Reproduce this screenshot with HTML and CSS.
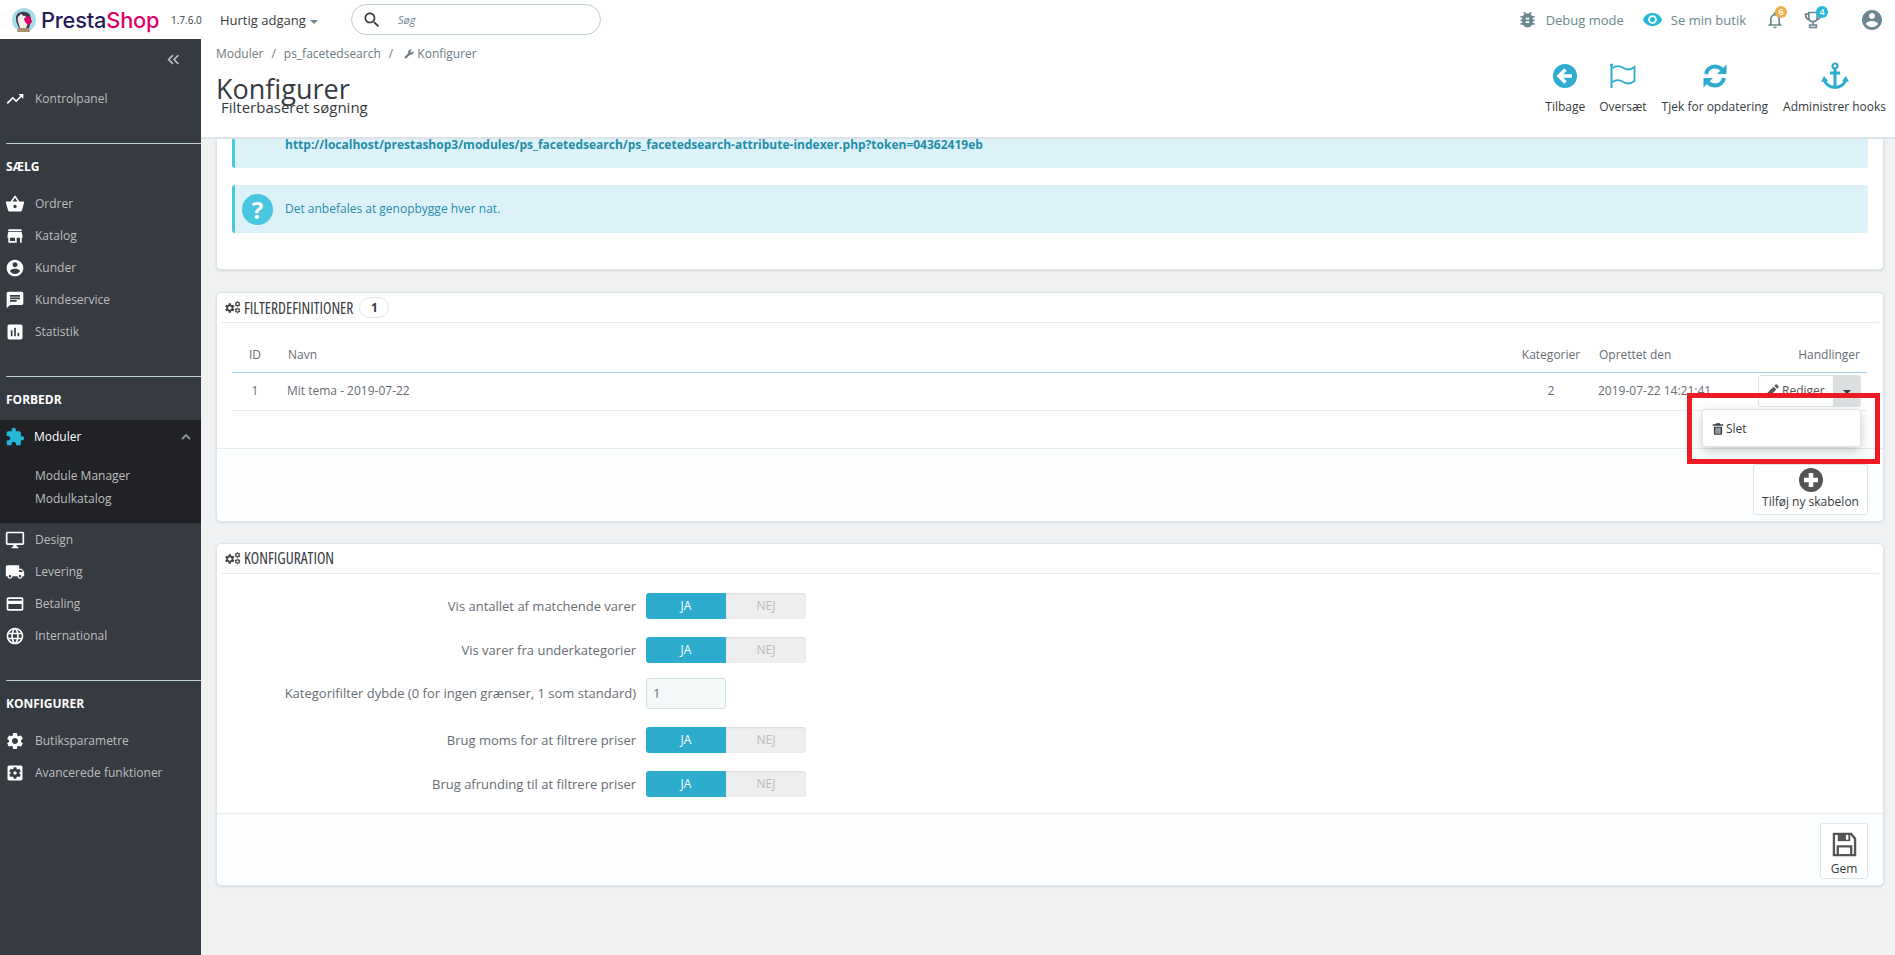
FILE: index.html
```html
<!DOCTYPE html>
<html lang="da">
<head>
  <meta charset="UTF-8" />
  <title>Konfigurer - PrestaShop</title>
  <link rel="stylesheet" href="styles.css">
</head>
<body>
  <svg class="sprite" xmlns="http://www.w3.org/2000/svg">
    <symbol id="i-trend" viewBox="0 0 24 24"><path d="M16 6l2.29 2.29-4.88 4.88-4-4L2 16.59 3.41 18l6-6 4 4 6.3-6.29L22 12V6z"/></symbol>
    <symbol id="i-basket" viewBox="0 0 24 24"><path d="M17.21 9l-4.38-6.56c-.19-.28-.51-.42-.83-.42-.32 0-.64.14-.83.43L6.79 9H2c-.55 0-1 .45-1 1 0 .09.01.18.04.27l2.54 9.27c.23.84 1 1.46 1.92 1.46h13c.92 0 1.69-.62 1.93-1.46l2.54-9.27L23 10c0-.55-.45-1-1-1h-4.79zM9 9l3-4.4L15 9H9zm3 8c-1.1 0-2-.9-2-2s.9-2 2-2 2 .9 2 2-.9 2-2 2z"/></symbol>
    <symbol id="i-store" viewBox="0 0 24 24"><path d="M20 4H4v2h16V4zm1 10v-2l-1-5H4l-1 5v2h1v6h10v-6h4v6h2v-6h1zm-9 4H6v-4h6v4z"/></symbol>
    <symbol id="i-account" viewBox="0 0 24 24"><path d="M12 2C6.48 2 2 6.48 2 12s4.48 10 10 10 10-4.48 10-10S17.52 2 12 2zm0 3c1.66 0 3 1.34 3 3s-1.34 3-3 3-3-1.34-3-3 1.34-3 3-3zm0 14.2c-2.5 0-4.71-1.28-6-3.22.03-1.99 4-3.08 6-3.08 1.99 0 5.97 1.09 6 3.08-1.29 1.94-3.5 3.22-6 3.22z"/></symbol>
    <symbol id="i-chat" viewBox="0 0 24 24"><path d="M20 2H4c-1.1 0-1.99.9-1.99 2L2 22l4-4h14c1.1 0 2-.9 2-2V4c0-1.1-.9-2-2-2zM6 9h12v2H6V9zm8 5H6v-2h8v2zm4-6H6V6h12v2z"/></symbol>
    <symbol id="i-stats" viewBox="0 0 24 24"><path d="M19 3H5c-1.1 0-2 .9-2 2v14c0 1.1.9 2 2 2h14c1.1 0 2-.9 2-2V5c0-1.1-.9-2-2-2zM9 17H7v-7h2v7zm4 0h-2V7h2v10zm4 0h-2v-4h2v4z"/></symbol>
    <symbol id="i-puzzle" viewBox="0 0 24 24"><path d="M20.5 11H19V7c0-1.1-.9-2-2-2h-4V3.5C13 2.12 11.88 1 10.5 1S8 2.12 8 3.5V5H4c-1.1 0-1.99.9-1.99 2v3.8H3.5c1.49 0 2.7 1.21 2.7 2.7s-1.21 2.7-2.7 2.7H2V20c0 1.1.9 2 2 2h3.8v-1.5c0-1.49 1.21-2.7 2.7-2.7 1.49 0 2.7 1.21 2.7 2.7V22H17c1.1 0 2-.9 2-2v-4h1.5c1.38 0 2.5-1.12 2.5-2.5S21.88 11 20.5 11z"/></symbol>
    <symbol id="i-desktop" viewBox="0 0 24 24"><path d="M21 2H3c-1.1 0-2 .9-2 2v12c0 1.1.9 2 2 2h7v2H8v2h8v-2h-2v-2h7c1.1 0 2-.9 2-2V4c0-1.1-.9-2-2-2zm0 14H3V4h18v12z"/></symbol>
    <symbol id="i-truck" viewBox="0 0 24 24"><path d="M20 8h-3V4H3c-1.1 0-2 .9-2 2v11h2c0 1.66 1.34 3 3 3s3-1.34 3-3h6c0 1.66 1.34 3 3 3s3-1.34 3-3h2v-5l-3-4zM6 18.5c-.83 0-1.5-.67-1.5-1.5s.67-1.5 1.5-1.5 1.5.67 1.5 1.5-.67 1.5-1.5 1.5zm13.5-9l1.96 2.5H17V9.5h2.5zm-1.5 9c-.83 0-1.5-.67-1.5-1.5s.67-1.5 1.5-1.5 1.5.67 1.5 1.5-.67 1.5-1.5 1.5z"/></symbol>
    <symbol id="i-card" viewBox="0 0 24 24"><path d="M20 4H4c-1.11 0-1.99.89-1.99 2L2 18c0 1.11.89 2 2 2h16c1.11 0 2-.89 2-2V6c0-1.11-.89-2-2-2zm0 14H4v-6h16v6zm0-10H4V6h16v2z"/></symbol>
    <symbol id="i-globe" viewBox="0 0 24 24"><path d="M11.99 2C6.47 2 2 6.48 2 12s4.47 10 9.99 10C17.52 22 22 17.52 22 12S17.52 2 11.99 2zm6.93 6h-2.95c-.32-1.25-.78-2.45-1.38-3.56 1.84.63 3.37 1.91 4.33 3.56zM12 4.04c.83 1.2 1.48 2.53 1.91 3.96h-3.82c.43-1.43 1.08-2.76 1.91-3.96zM4.26 14C4.1 13.36 4 12.69 4 12s.1-1.36.26-2h3.38c-.08.66-.14 1.32-.14 2 0 .68.06 1.34.14 2H4.26zm.82 2h2.95c.32 1.25.78 2.45 1.38 3.56-1.84-.63-3.37-1.9-4.33-3.56zm2.95-8H5.08c.96-1.66 2.49-2.93 4.33-3.56C8.81 5.55 8.35 6.75 8.03 8zM12 19.96c-.83-1.2-1.48-2.53-1.91-3.96h3.82c-.43 1.43-1.08 2.76-1.91 3.96zM14.34 14H9.66c-.09-.66-.16-1.32-.16-2 0-.68.07-1.35.16-2h4.68c.09.65.16 1.32.16 2 0 .68-.07 1.34-.16 2zm.25 5.56c.6-1.11 1.06-2.31 1.38-3.56h2.95c-.96 1.65-2.49 2.93-4.33 3.56zM16.36 14c.08-.66.14-1.32.14-2 0-.68-.06-1.34-.14-2h3.38c.16.64.26 1.31.26 2s-.1 1.36-.26 2h-3.38z"/></symbol>
    <symbol id="i-gear" viewBox="0 0 24 24"><path d="M19.14 12.94c.04-.3.06-.61.06-.94 0-.32-.02-.64-.07-.94l2.03-1.58c.18-.14.23-.41.12-.61l-1.92-3.32c-.12-.22-.37-.29-.59-.22l-2.39.96c-.5-.38-1.03-.7-1.62-.94l-.36-2.54c-.04-.24-.24-.41-.48-.41h-3.84c-.24 0-.43.17-.47.41l-.36 2.54c-.59.24-1.13.57-1.62.94l-2.39-.96c-.22-.08-.47 0-.59.22L2.74 8.87c-.12.21-.08.47.12.61l2.03 1.58c-.05.3-.09.63-.09.94s.02.64.07.94l-2.03 1.58c-.18.14-.23.41-.12.61l1.92 3.32c.12.22.37.29.59.22l2.39-.96c.5.38 1.03.7 1.62.94l.36 2.54c.05.24.24.41.48.41h3.84c.24 0 .44-.17.47-.41l.36-2.54c.59-.24 1.13-.56 1.62-.94l2.39.96c.22.08.47 0 .59-.22l1.92-3.32c.12-.22.07-.47-.12-.61l-2.01-1.58zM12 15.6c-1.98 0-3.6-1.62-3.6-3.6s1.62-3.6 3.6-3.6 3.6 1.62 3.6 3.6-1.62 3.6-3.6 3.6z"/></symbol>
    <symbol id="i-gearbox" viewBox="0 0 24 24"><path d="M12 10c-1.1 0-2 .9-2 2s.9 2 2 2 2-.9 2-2-.9-2-2-2zm7-7H5c-1.11 0-2 .9-2 2v14c0 1.1.89 2 2 2h14c1.11 0 2-.9 2-2V5c0-1.1-.89-2-2-2zm-1.75 9c0 .23-.02.46-.05.68l1.48 1.16c.13.11.17.3.08.45l-1.4 2.42c-.09.15-.27.21-.43.15l-1.74-.7c-.36.28-.76.51-1.18.69l-.26 1.85c-.03.17-.18.3-.35.3h-2.8c-.17 0-.32-.13-.35-.29l-.26-1.85c-.43-.18-.82-.41-1.18-.69l-1.74.7c-.16.06-.34 0-.43-.15l-1.4-2.42c-.09-.15-.05-.34.08-.45l1.48-1.16c-.03-.23-.05-.46-.05-.69 0-.23.02-.46.05-.68l-1.48-1.16c-.13-.11-.17-.3-.08-.45l1.4-2.42c.09-.15.27-.21.43-.15l1.74.7c.36-.28.76-.51 1.18-.69l.26-1.85c.03-.17.18-.3.35-.3h2.8c.17 0 .32.13.35.29l.26 1.85c.43.18.82.41 1.18.69l1.74-.7c.16-.06.34 0 .43.15l1.4 2.42c.09.15.05.34-.08.45l-1.48 1.16c.03.23.05.46.05.69z"/></symbol>
    <symbol id="i-search" viewBox="0 0 24 24"><path d="M15.5 14h-.79l-.28-.27C15.41 12.59 16 11.11 16 9.5 16 5.91 13.09 3 9.5 3S3 5.91 3 9.5 5.91 16 9.5 16c1.61 0 3.09-.59 4.23-1.57l.27.28v.79l5 4.99L20.49 19l-4.99-5zm-6 0C7.01 14 5 11.99 5 9.5S7.01 5 9.5 5 14 7.01 14 9.5 11.99 14 9.5 14z"/></symbol>
    <symbol id="i-bug" viewBox="0 0 24 24"><path d="M20 8h-2.81c-.45-.78-1.07-1.45-1.82-1.96L17 4.41 15.59 3l-2.17 2.17C12.96 5.06 12.49 5 12 5c-.49 0-.96.06-1.41.17L8.41 3 7 4.41l1.62 1.63C7.88 6.55 7.26 7.22 6.81 8H4v2h2.09c-.05.33-.09.66-.09 1v1H4v2h2v1c0 .34.04.67.09 1H4v2h2.81c1.04 1.79 2.97 3 5.19 3s4.15-1.21 5.19-3H20v-2h-2.09c.05-.33.09-.66.09-1v-1h2v-2h-2v-1c0-.34-.04-.67-.09-1H20V8zm-6 8h-4v-2h4v2zm0-4h-4v-2h4v2z"/></symbol>
    <symbol id="i-eye" viewBox="0 0 24 24"><path d="M12 4.5C7 4.5 2.73 7.61 1 12c1.73 4.39 6 7.5 11 7.5s9.27-3.11 11-7.5c-1.73-4.39-6-7.5-11-7.5zM12 17c-2.76 0-5-2.24-5-5s2.24-5 5-5 5 2.24 5 5-2.24 5-5 5zm0-8c-1.66 0-3 1.34-3 3s1.34 3 3 3 3-1.34 3-3-1.34-3-3-3z"/></symbol>
    <symbol id="i-bell" viewBox="0 0 24 24"><path d="M12 22c1.1 0 2-.9 2-2h-4c0 1.1.9 2 2 2zm6-6v-5c0-3.07-1.63-5.64-4.5-6.32V4c0-.83-.67-1.5-1.5-1.5s-1.5.67-1.5 1.5v.68C7.64 5.36 6 7.92 6 11v5l-2 2v1h16v-1l-2-2zm-2 1H8v-6c0-2.48 1.51-4.5 4-4.5s4 2.02 4 4.5v6z"/></symbol>
    <symbol id="i-edit" viewBox="0 0 24 24"><path d="M3 17.25V21h3.75L17.81 9.94l-3.75-3.75L3 17.25zM20.71 7.04c.39-.39.39-1.02 0-1.41l-2.34-2.34c-.39-.39-1.02-.39-1.41 0l-1.83 1.83 3.75 3.75 1.83-1.83z"/></symbol>
    <symbol id="i-wrench" viewBox="0 0 24 24"><path d="M22.7 19l-9.1-9.1c.9-2.3.4-5-1.5-6.9-2-2-5-2.4-7.4-1.3L9 6 6 9 1.6 4.7C.4 7.1.9 10.1 2.9 12.1c1.9 1.9 4.6 2.4 6.9 1.5l9.1 9.1c.4.4 1 .4 1.4 0l2.3-2.3c.5-.4.5-1.1.1-1.4z" transform="matrix(-1 0 0 1 24 0)"/></symbol>
    <symbol id="i-trash" viewBox="0 0 24 24"><path fill-rule="evenodd" d="M5 8h14v12c0 1.1-.9 2-2 2H7c-1.1 0-2-.9-2-2V8zm3 2v10h1.500V10H8zm3.250 0v10h1.500V10h-1.500zm3.250 0v10H16V10h-1.500zM3 4h5l1-2h6l1 2h5v2.500H3V4z"/></symbol>
  </svg>

  <header class="topbar">
    <a class="logo">
      <svg class="logo-mark" viewBox="0 0 24 24">
        <circle cx="12" cy="12" r="12" fill="#a5dbe8"/>
        <path d="M4 9c1-6 11-7 14-2 1 3 1 8-1 13H7C5 16 3.500 13 4 9z" fill="#3f3e4e"/>
        <path d="M6 9c2-2 7-2 9 1 1 3 1 7-1 10H8C7 16 5 12 6 9z" fill="#efeee8"/>
        <circle cx="9" cy="7.500" r="1.300" fill="#fff"/>
        <path d="M12 10l6-2 2 6-3 3c-3-1-5-4-5-7z" fill="#df0067"/>
        <path d="M6 20h11l1 4H5z" fill="#a98f72"/>
      </svg>
      <span class="logo-text"><span class="logo-presta">Presta</span><span class="logo-shop">Shop</span></span>
    </a>
    <span class="version">1.7.6.0</span>
    <a class="quick">Hurtig adgang <i class="caret"></i></a>
    <div class="search">
      <svg class="ic search-ic"><use href="#i-search"/></svg>
      <span class="search-ph">Søg</span>
    </div>
    <div class="top-right">
      <a class="top-link top-link-debug"><svg class="ic ic-bug"><use href="#i-bug"/></svg><span>Debug mode</span></a>
      <a class="top-link"><svg class="ic ic-eye"><use href="#i-eye"/></svg><span>Se min butik</span></a>
      <a class="notif notif-bell"><svg class="ic"><use href="#i-bell"/></svg><b class="count count-orange">6</b></a>
      <a class="notif notif-cup">
        <svg class="ic-cup" viewBox="0 0 24 24" fill="none" stroke="#6c868e" stroke-width="2">
          <path d="M7 3h10v6c0 3-2 5-5 5s-5-2-5-5V3zM7 5H3c0 4 1 6 5 7M17 5h4c0 4-1 6-5 7M12 14v4M8 21v-3h8v3H8z"/>
        </svg>
        <b class="count count-blue">4</b>
      </a>
      <svg class="ic ic-user"><use href="#i-account"/></svg>
    </div>
  </header>

  <div class="layout">
    <nav class="sidebar">
      <div class="collapse">
        <svg viewBox="0 0 12 12" fill="none" stroke="#bebebe" stroke-width="1.500"><path d="M5.500 2L1.500 6l4 4M10.500 2l-4 4 4 4"/></svg>
      </div>
      <a class="nav-item nav-first"><svg class="ic"><use href="#i-trend"/></svg>Kontrolpanel</a>

      <div class="nav-title">SÆLG</div>
      <a class="nav-item"><svg class="ic"><use href="#i-basket"/></svg>Ordrer</a>
      <a class="nav-item"><svg class="ic"><use href="#i-store"/></svg>Katalog</a>
      <a class="nav-item"><svg class="ic"><use href="#i-account"/></svg>Kunder</a>
      <a class="nav-item"><svg class="ic"><use href="#i-chat"/></svg>Kundeservice</a>
      <a class="nav-item"><svg class="ic"><use href="#i-stats"/></svg>Statistik</a>

      <div class="nav-title">FORBEDR</div>
      <div class="nav-open">
        <a class="nav-item nav-active">
          <svg class="ic ic-puzzle"><use href="#i-puzzle"/></svg>Moduler
          <svg class="chev" viewBox="0 0 12 12" fill="none" stroke="#8a9299" stroke-width="1.800"><path d="M2 8l4-4 4 4"/></svg>
        </a>
        <a class="nav-sub">Module Manager</a>
        <a class="nav-sub">Modulkatalog</a>
      </div>
      <a class="nav-item nav-after-open"><svg class="ic"><use href="#i-desktop"/></svg>Design</a>
      <a class="nav-item"><svg class="ic"><use href="#i-truck"/></svg>Levering</a>
      <a class="nav-item"><svg class="ic"><use href="#i-card"/></svg>Betaling</a>
      <a class="nav-item"><svg class="ic"><use href="#i-globe"/></svg>International</a>

      <div class="nav-title">KONFIGURER</div>
      <a class="nav-item"><svg class="ic"><use href="#i-gear"/></svg>Butiksparametre</a>
      <a class="nav-item"><svg class="ic"><use href="#i-gearbox"/></svg>Avancerede funktioner</a>
    </nav>

    <main class="main">
      <div class="page-head">
        <div class="head-left">
          <div class="crumbs">
            <span>Moduler</span><i>/</i><span>ps_facetedsearch</span><i>/</i>
            <span class="crumb-last"><svg class="ic ic-wrench"><use href="#i-wrench"/></svg> Konfigurer</span>
          </div>
          <h1>Konfigurer</h1>
          <h2>Filterbaseret søgning</h2>
        </div>
        <div class="toolbar">
          <a class="tool tool-back">
            <svg viewBox="0 0 26 26"><circle cx="13" cy="13" r="12" fill="#2eacce"/><path d="M13.500 6.500L7 13l6.500 6.500M7.500 13H20" fill="none" stroke="#fff" stroke-width="3.600"/></svg>
            <span>Tilbage</span>
          </a>
          <a class="tool tool-flag">
            <svg viewBox="0 0 28 26" fill="none" stroke="#2eacce" stroke-width="1.800"><circle cx="2.500" cy="2" r="1.500" fill="#2eacce" stroke="none"/><path d="M2.500 3v22" stroke-width="2"/><path d="M3.500 5c4-3 8-2 11 0s7 2 11-1v14c-4 3-8 3-11 1s-7-3-11 0"/></svg>
            <span>Oversæt</span>
          </a>
          <a class="tool tool-refresh">
            <svg viewBox="0 0 26 26"><path d="M4 11C5 6.500 8.500 3.500 13 3.500c3 0 5.300 1.300 7 3" fill="none" stroke="#2eacce" stroke-width="4"/><path d="M24.500 1.500V11h-9.500z" fill="#2eacce"/><path d="M22 15c-1 4.500-4.500 7.500-9 7.500-3 0-5.300-1.300-7-3" fill="none" stroke="#2eacce" stroke-width="4"/><path d="M1.500 24.500V15h9.500z" fill="#2eacce"/></svg>
            <span>Tjek for opdatering</span>
          </a>
          <a class="tool tool-anchor">
            <svg viewBox="0 0 28 28" fill="none" stroke="#2eacce"><circle cx="14" cy="4" r="2.500" stroke-width="2.200"/><path d="M14 6.500V26M9 11h10" stroke-width="3"/><path d="M3.500 17c.5 5 5 8 10.500 8.500 5.500-.5 10-3.500 10.500-8.500" stroke-width="3"/><path d="M0 20l3-6 4 5zM28 20l-3-6-4 5z" fill="#2eacce" stroke="none"/></svg>
            <span>Administrer hooks</span>
          </a>
        </div>
      </div>

      <div class="content">
        <section class="card card-info">
          <div class="alert alert-link">
            <a>http://localhost/prestashop3/modules/ps_facetedsearch/ps_facetedsearch-attribute-indexer.php?token=04362419eb</a>
          </div>
          <div class="alert alert-note">
            <span class="alert-q">?</span>
            <span>Det anbefales at genopbygge hver nat.</span>
          </div>
        </section>

        <section class="card">
          <h3 class="card-head">
            <svg class="ic-gears" viewBox="0 0 30 24"><use href="#i-gear" x="-2" y="2" width="22" height="22"/><use href="#i-gear" x="17" y="-1" width="13" height="13"/><use href="#i-gear" x="17" y="11" width="13" height="13"/></svg>
            <span class="head-text">FILTERDEFINITIONER</span>
            <span class="badge">1</span>
          </h3>
          <div class="table-wrap">
            <table class="list">
              <colgroup><col class="c-id"><col><col class="c-cat"><col class="c-date"><col class="c-act"></colgroup>
              <thead>
                <tr><th class="center">ID</th><th>Navn</th><th class="center">Kategorier</th><th class="th-date">Oprettet den</th><th class="right">Handlinger</th></tr>
              </thead>
              <tbody>
                <tr>
                  <td class="center">1</td>
                  <td>Mit tema - 2019-07-22</td>
                  <td class="center">2</td>
                  <td class="date">2019-07-22 14:21:41</td>
                  <td class="right">
                    <div class="btn-group">
                      <a class="btn-edit"><svg class="ic"><use href="#i-edit"/></svg>Rediger</a>
                      <a class="btn-caret"><i class="caret caret-dark"></i></a>
                      <div class="menu"><a><svg class="ic"><use href="#i-trash"/></svg>Slet</a></div>
                    </div>
                  </td>
                </tr>
              </tbody>
            </table>
          </div>
          <div class="card-foot">
            <a class="foot-btn foot-btn-add">
              <svg viewBox="0 0 24 24"><circle cx="12" cy="12" r="12" fill="#555"/><path d="M12 5v14M5 12h14" stroke="#fff" stroke-width="4.500"/></svg>
              <span>Tilføj ny skabelon</span>
            </a>
          </div>
        </section>

        <section class="card">
          <h3 class="card-head">
            <svg class="ic-gears" viewBox="0 0 30 24"><use href="#i-gear" x="-2" y="2" width="22" height="22"/><use href="#i-gear" x="17" y="-1" width="13" height="13"/><use href="#i-gear" x="17" y="11" width="13" height="13"/></svg>
            <span class="head-text">KONFIGURATION</span>
          </h3>
          <div class="form">
            <div class="form-row">
              <label>Vis antallet af matchende varer</label>
              <div class="switch"><span class="on">JA</span><span class="off">NEJ</span></div>
            </div>
            <div class="form-row">
              <label>Vis varer fra underkategorier</label>
              <div class="switch"><span class="on">JA</span><span class="off">NEJ</span></div>
            </div>
            <div class="form-row form-row-input">
              <label>Kategorifilter dybde (0 for ingen grænser, 1 som standard)</label>
              <input class="num" type="text" value="1">
            </div>
            <div class="form-row">
              <label>Brug moms for at filtrere priser</label>
              <div class="switch"><span class="on">JA</span><span class="off">NEJ</span></div>
            </div>
            <div class="form-row">
              <label>Brug afrunding til at filtrere priser</label>
              <div class="switch"><span class="on">JA</span><span class="off">NEJ</span></div>
            </div>
          </div>
          <div class="card-foot card-foot-save">
            <a class="foot-btn foot-btn-save">
              <svg viewBox="0 0 26 26" fill="none" stroke="#555" stroke-width="2.400"><path d="M2 2h18l4 5v17H2z"/><path d="M6 24v-9h14v9"/><path d="M6 1.500h13v8H6z" fill="#555" stroke="none"/><path d="M14.500 3h2.500v5h-2.500z" fill="#fff" stroke="none"/></svg>
              <span>Gem</span>
            </a>
          </div>
        </section>
      </div>
    </main>
  </div>

  <div class="annotation"></div>
</body>
</html>
```

FILE: styles.css
```css
* {
  box-sizing: border-box;
}

html, body {
  height: 100%;
}

body {
  margin: 0;
  position: relative;
  overflow: hidden;
  background: #eff1f2;
  color: #363a41;
  font-family: "Open Sans", sans-serif;
  font-size: 12px;
  line-height: 18px;
}

.sprite {
  display: none;
}

.ic {
  width: 20px;
  height: 20px;
  fill: currentColor;
  flex: none;
}

/* top bar */
.topbar {
  height: 39px;
  background: #fff;
  display: flex;
  align-items: center;
  padding-left: 12px;
}

.logo {
  display: flex;
  align-items: center;
  width: 159px;
}

.logo-mark {
  width: 24px;
  height: 24px;
  margin-right: 5px;
}

.logo-text {
  font-family: Inter, sans-serif;
  font-size: 21.800px;
  font-weight: 500;
  letter-spacing: -.2px;
}

.logo-presta {
  color: #251b5b;
}

.logo-shop {
  color: #df0067;
}

.version {
  font-size: 10px;
  color: #363a41;
  width: 49px;
}

.quick {
  font-size: 13px;
  color: #363a41;
  width: 131px;
}

.caret {
  display: inline-block;
  border-top: 4px solid #6c868e;
  border-left: 4px solid transparent;
  border-right: 4px solid transparent;
  margin-left: 1px;
  vertical-align: 1px;
}

.search {
  width: 250px;
  height: 31px;
  border: 1px solid #bbcdd2;
  border-radius: 16px;
  display: flex;
  align-items: center;
  padding-left: 10px;
  color: #363a41;
}

.search-ic {
  width: 20px;
  height: 20px;
}

.search-ph {
  margin-left: 16px;
  font-size: 11px;
  font-style: italic;
  color: #6c868e;
}

.top-right {
  margin-left: auto;
  display: flex;
  align-items: center;
  padding-right: 11px;
  color: #6c868e;
}

.top-link {
  display: flex;
  align-items: center;
  gap: 8px;
  font-size: 13px;
  margin-right: 19px;
}

.top-link-debug {
  margin-right: 18px;
}

.ic-bug {
  width: 21px;
  height: 21px;
}

.ic-eye {
  width: 21px;
  height: 21px;
  color: #25b9d7;
}

.notif {
  position: relative;
  display: flex;
  width: 38px;
}

.ic-cup {
  width: 20px;
  height: 20px;
}

.count {
  position: absolute;
  top: -4px;
  left: 10px;
  width: 12px;
  height: 12px;
  border-radius: 50%;
  color: #fff;
  font-size: 9px;
  font-weight: 600;
  line-height: 12px;
  text-align: center;
}

.count-orange {
  background: #f0ad4e;
}

.count-blue {
  left: 13px;
  background: #25b9d7;
}

.ic-user {
  width: 24px;
  height: 24px;
  margin-left: 19px;
}

.layout {
  display: flex;
  height: 916px;
}

/* sidebar */
.sidebar {
  width: 201px;
  flex: none;
  background: #363a41;
  color: #bebebe;
}

.collapse {
  height: 40px;
  padding: 14px 0 0 167px;
}

.collapse svg {
  display: block;
  width: 13px;
  height: 13px;
}

.nav-item {
  height: 32px;
  display: flex;
  align-items: center;
  gap: 10px;
  padding-left: 5px;
  font-size: 12px;
}

.nav-item .ic {
  color: #fff;
}

.nav-first {
  margin-top: 4px;
}

.nav-title {
  margin: 28px 0 0 6px;
  height: 45px;
  padding-top: 14px;
  border-top: 1px solid #bcd0d6;
  color: #fff;
  font-size: 12px;
  font-weight: 700;
}

.nav-open {
  margin-top: -1px;
  height: 103px;
  background: #202226;
}

.nav-after-open {
  margin-top: 1px;
}

.nav-active {
  height: 34px;
  color: #fff;
  gap: 9px;
}

.nav-active .ic-puzzle {
  color: #25b9d7;
}

.chev {
  width: 12px;
  height: 12px;
  margin-left: auto;
  margin-right: 9px;
}

.nav-sub {
  display: block;
  height: 23px;
  line-height: 23px;
  padding-left: 35px;
  color: #bebebe;
}

.nav-active + .nav-sub {
  margin-top: 10px;
}

/* page head */
.main {
  flex: 1;
  min-width: 0;
  display: flex;
  flex-direction: column;
}

.page-head {
  height: 100px;
  background: #fff;
  border-bottom: 2px solid #dfe5e8;
  display: flex;
  justify-content: space-between;
  padding: 6px 9px 0 15px;
}

.crumbs {
  display: flex;
  gap: 8px;
  font-size: 12px;
  color: #6c7a82;
  white-space: nowrap;
}

.crumbs i {
  font-style: normal;
}

.crumb-last {
  margin-left: 3px;
}

.ic-wrench {
  width: 10px;
  height: 10px;
  vertical-align: -1px;
}

h1 {
  margin: 7px 0 0;
  font-size: 27px;
  font-weight: 400;
  line-height: 38px;
  color: #363a41;
}

h2 {
  margin: -11px 0 0 5px;
  font-size: 15px;
  font-weight: 400;
  line-height: 20px;
  color: #363a41;
}

.toolbar {
  display: flex;
  align-items: flex-start;
  padding-top: 18px;
}

.tool {
  display: flex;
  flex-direction: column;
  align-items: center;
  color: #363a41;
  font-size: 12px;
}

.tool svg {
  display: block;
  width: 26px;
  height: 26px;
  margin-bottom: 9px;
}

.tool-flag svg {
  width: 28px;
}

.tool-anchor svg {
  width: 28px;
  height: 28px;
  margin-top: -1px;
  margin-bottom: 8px;
}

.tool span {
  white-space: nowrap;
}

.tool-flag {
  margin-left: 14px;
}

.tool-refresh {
  margin-left: 15px;
}

.tool-anchor {
  margin-left: 15px;
}

/* content */
.content {
  flex: 1;
  padding: 0 11px 0 15px;
}

.card {
  background: #fff;
  border: 1px solid #dbe6e9;
  border-radius: 5px;
  box-shadow: 0 1px 3px rgba(0, 0, 0, .1);
  margin-bottom: 21px;
}

.card-info {
  border-top: 0;
  border-radius: 0 0 5px 5px;
  padding: 0 15px 36px 15px;
  height: 131px;
  margin-bottom: 22px;
}

.alert {
  background: #dcf2f8;
  border-left: 3px solid #4ac7e0;
  border-radius: 3px;
  color: #1f8ea8;
  font-size: 12px;
}

.alert-link {
  height: 29px;
  padding-left: 50px;
  border-radius: 0 0 3px 3px;
  margin-bottom: 17px;
}

.alert-link a {
  display: block;
  font-weight: 700;
  line-height: 11px;
}

.alert-note {
  height: 48px;
  display: flex;
  align-items: center;
  gap: 12px;
  padding-left: 7px;
}

.alert-q {
  width: 31px;
  height: 31px;
  border-radius: 50%;
  background: #4ac7e0;
  color: #fff;
  font-size: 24px;
  font-weight: 700;
  line-height: 31px;
  text-align: center;
}

.card-head {
  margin: 0 4px;
  height: 30px;
  border-bottom: 1px solid #e8eced;
  display: flex;
  align-items: center;
  padding-left: 4px;
  font-size: 15.500px;
  font-weight: 400;
  color: #363a41;
}

.head-text {
  font-stretch: 82%;
}

.ic-gears {
  width: 16px;
  height: 13px;
  margin-right: 3px;
  fill: #444;
}

.badge {
  margin-left: 6px;
  width: 30px;
  height: 21px;
  border: 1px solid #dbe6e9;
  border-radius: 11px;
  font-size: 12px;
  font-weight: 700;
  line-height: 19px;
  text-align: center;
}

/* filter table */
.table-wrap {
  padding: 13px 16px 37px 15px;
}

.list {
  width: 100%;
  border-collapse: collapse;
  table-layout: fixed;
}

.c-id {
  width: 46px;
}

.c-cat {
  width: 70px;
}

.c-date {
  width: 135px;
}

.c-act {
  width: 146px;
}

.list th {
  height: 36px;
  padding: 2px 0 0 10px;
  border-bottom: 1px solid #a0d0eb;
  color: #676d73;
  font-weight: 400;
  text-align: left;
}

.list td {
  height: 38px;
  padding: 0 0 0 9px;
  border-bottom: 1px solid #e8eced;
  color: #676d73;
}

.list .center {
  padding-left: 0;
  text-align: center;
}

.list .right {
  padding-left: 0;
  padding-right: 7px;
  text-align: right;
}

.list td.right {
  padding-right: 6px;
}

.list .th-date {
  padding-left: 13px;
}

.list .date {
  padding-left: 12px;
  white-space: nowrap;
}

.btn-group {
  position: relative;
  display: flex;
  width: 103px;
  height: 32px;
  margin-left: auto;
  border: 1px solid #dbe6e9;
  border-radius: 3px;
  background: #fff;
  color: #555;
  text-align: left;
}

.btn-edit {
  flex: 1;
  display: flex;
  align-items: center;
  padding-left: 4px;
  gap: 1px;
}

.btn-edit .ic {
  width: 18px;
  height: 18px;
  color: #555;
}

.btn-caret {
  width: 27px;
  background: #dcdfe0;
  display: flex;
  align-items: center;
  justify-content: center;
}

.caret-dark {
  border-top-color: #363a41;
  margin: 2px 0 0;
}

.menu {
  position: absolute;
  top: 33px;
  right: -1px;
  width: 159px;
  height: 38px;
  background: #fff;
  border: 1px solid #dbe6e9;
  border-radius: 3px;
  box-shadow: 0 4px 12px rgba(0, 0, 0, .2);
  z-index: 2;
}

.menu a {
  display: flex;
  align-items: center;
  height: 37px;
  padding-left: 8px;
  gap: 1px;
  color: #363a41;
}

.menu .ic {
  width: 14px;
  height: 14px;
}

/* card footers */
.card-foot {
  background: #fcfdfe;
  border-top: 1px solid #e8eced;
  border-radius: 0 0 5px 5px;
  display: flex;
  justify-content: flex-end;
  padding: 15px 15px 6px;
}

.card-foot-save {
  padding-top: 9px;
}

.foot-btn {
  display: flex;
  flex-direction: column;
  align-items: center;
  background: #fff;
  border: 1px solid #dbe6e9;
  border-radius: 3px;
  color: #363a41;
  font-size: 12px;
  white-space: nowrap;
}

.foot-btn svg {
  display: block;
}

.foot-btn-add {
  width: 115px;
  height: 51px;
  padding-top: 3px;
}

.foot-btn-add svg {
  width: 24px;
  height: 24px;
  margin-bottom: 1px;
}

.foot-btn-save {
  width: 48px;
  height: 56px;
  padding-top: 8px;
}

.foot-btn-save svg {
  width: 25px;
  height: 25px;
  margin-bottom: 3px;
}

/* config form */
.form {
  padding: 19px 0 16px;
}

.form-row {
  display: flex;
  align-items: center;
  margin-bottom: 18px;
}

.form-row:last-child {
  margin-bottom: 0;
}

.form-row-input {
  margin-top: -3px;
}

.form-row label {
  width: 419px;
  margin-right: 10px;
  color: #676d73;
  font-size: 13px;
  text-align: right;
  white-space: nowrap;
}

.switch {
  display: flex;
  width: 160px;
  height: 26px;
  border-radius: 3px;
  text-align: center;
  line-height: 26px;
}

.switch span {
  flex: 1;
}

.switch .on {
  background: #2eacce;
  color: #fff;
  border-radius: 3px 0 0 3px;
}

.switch .off {
  background: #eee;
  color: #bbb;
  border-radius: 0 3px 3px 0;
  box-shadow: inset 0 1px 2px rgba(0, 0, 0, .08);
}

.num {
  width: 80px;
  height: 31px;
  padding: 0 6px;
  background: #f5f8f9;
  border: 1px solid #d3e0e3;
  border-radius: 3px;
  color: #676d73;
  font-family: "Open Sans", sans-serif;
  font-size: 13px;
}

/* red box drawn over the screenshot */
.annotation {
  position: absolute;
  left: 1687px;
  top: 393px;
  width: 193px;
  height: 71px;
  border: 5px solid #ed1c24;
  z-index: 5;
}
```
